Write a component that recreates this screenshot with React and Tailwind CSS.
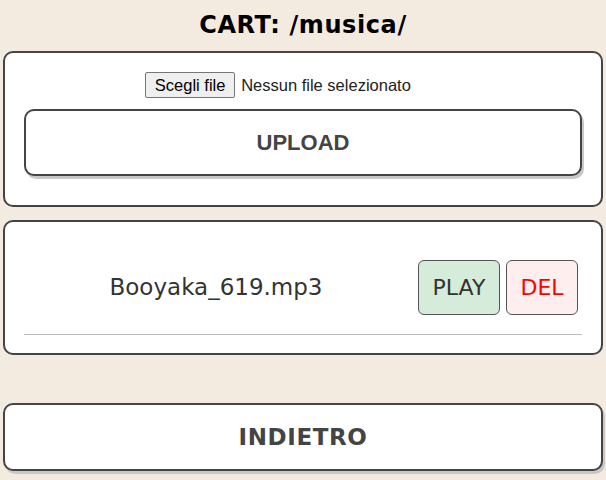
const files = [{ id: 1, name: "Booyaka_619.mp3" }];

const App = () => {
  return (
    <div className="min-h-screen w-full bg-[#f4ebe0] px-[3px] font-['DejaVu_Sans',Verdana,sans-serif]">
      <h1 className="pt-[11px] h-[51px] text-center text-[24px] font-bold leading-[28px] tracking-[0.6px] text-black">
        CART: /musica/
      </h1>

      <div className="h-[156px] rounded-[10px] border-2 border-[#444] bg-white px-[19px] pt-[19px]">
        <div className="flex items-center justify-center pr-[50px] font-['Liberation_Sans',Arial,sans-serif] text-[16.5px] text-[#222]">
          <span className="flex h-[26px] w-[90px] items-center justify-center rounded-[2px] border border-[#767676] bg-[#efefef] text-black">
            Scegli file
          </span>
          <span className="ml-[6px]">Nessun file selezionato</span>
        </div>
        <button className="mt-[11px] flex h-[67px] w-full items-center justify-center rounded-[10px] border-2 border-[#444] bg-white font-['Liberation_Sans',Arial,sans-serif] text-[22px] font-bold text-[#444] shadow-[2px_3px_0_#c8c8c8]">
          UPLOAD
        </button>
      </div>

      <div className="mt-[13px] h-[135px] rounded-[10px] border-2 border-[#444] bg-white px-[19px] pt-[38px]">
        {files.map((file) => (
          <div key={file.id} className="border-b border-[#bbb] pb-[19px]">
            <div className="flex h-[55px] items-center">
              <span className="flex-1 pr-[10px] text-center text-[23px] text-[#333]">
                {file.name}
              </span>
              <button className="h-[55px] w-[82px] rounded-[6px] border border-[#555] bg-[#d4ecd9] text-[22px] text-[#333]">
                PLAY
              </button>
              <button className="ml-[6px] mr-[4px] h-[55px] w-[72px] rounded-[6px] border border-[#555] bg-[#feeeee] text-[22px] text-[#ff0000]">
                DEL
              </button>
            </div>
          </div>
        ))}
      </div>

      <button className="mt-[48px] flex h-[68px] w-full items-center justify-center rounded-[10px] border-2 border-[#444] bg-white text-[23px] font-bold tracking-[0.6px] text-[#444] shadow-[2px_3px_0_#c8c8c8]">
        INDIETRO
      </button>
    </div>
  );
};

export default App;
